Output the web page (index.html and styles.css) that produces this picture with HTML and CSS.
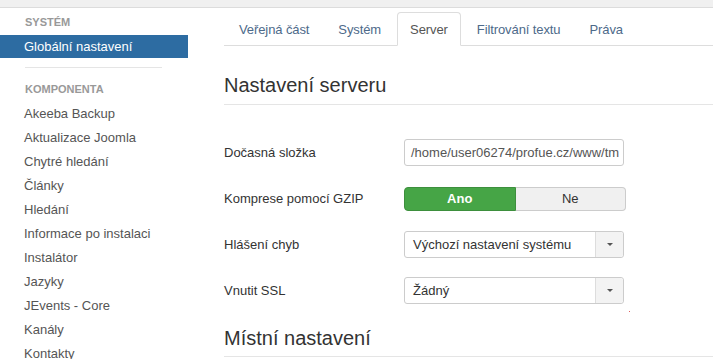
FILE: index.html
```html
<!DOCTYPE html>
<html lang="cs">
<head>
<meta charset="utf-8">
<title>Globální nastavení</title>
<link rel="stylesheet" href="styles.css">
</head>
<body>
<div class="topbar"></div>
<div class="layout">
  <aside class="sidebar">
    <div class="nav-header">SYSTÉM</div>
    <div class="nav-item active">Globální nastavení</div>
    <div class="divider"></div>
    <div class="nav-header second">KOMPONENTA</div>
    <div class="nav-item">Akeeba Backup</div>
    <div class="nav-item">Aktualizace Joomla</div>
    <div class="nav-item">Chytré hledání</div>
    <div class="nav-item">Články</div>
    <div class="nav-item">Hledání</div>
    <div class="nav-item">Informace po instalaci</div>
    <div class="nav-item">Instalátor</div>
    <div class="nav-item">Jazyky</div>
    <div class="nav-item">JEvents - Core</div>
    <div class="nav-item">Kanály</div>
    <div class="nav-item">Kontakty</div>
  </aside>
  <main class="content">
    <ul class="tabs">
      <li class="tab">Veřejná část</li>
      <li class="tab">Systém</li>
      <li class="tab active">Server</li>
      <li class="tab">Filtrování textu</li>
      <li class="tab">Práva</li>
    </ul>
    <h2 class="legend">Nastavení serveru</h2>
    <div class="form">
      <div class="row">
        <label class="label">Dočasná složka</label>
        <div class="input"><span class="input-text">/home/user06274/profue.cz/www/tm</span></div>
      </div>
      <div class="row">
        <label class="label">Komprese pomocí GZIP</label>
        <div class="toggle">
          <span class="opt yes">Ano</span>
          <span class="opt no">Ne</span>
        </div>
      </div>
      <div class="row">
        <label class="label">Hlášení chyb</label>
        <div class="select">
          <span class="value">Výchozí nastavení systému</span>
          <span class="arrow"><span class="caret"></span></span>
        </div>
      </div>
      <div class="row">
        <label class="label">Vnutit SSL</label>
        <div class="select">
          <span class="value">Žádný</span>
          <span class="arrow"><span class="caret"></span></span>
          <span class="dot"></span>
        </div>
      </div>
    </div>
    <h2 class="legend second">Místní nastavení</h2>
  </main>
</div>
</body>
</html>
```

FILE: styles.css
```css
* { box-sizing: border-box; }
html, body { margin: 0; padding: 0; }
body {
  font-family: "Liberation Sans", Arial, sans-serif;
  font-size: 13px;
  color: #333;
  background: #fff;
  width: 713px;
  height: 359px;
  overflow: hidden;
}
.topbar {
  height: 8px;
  background: #f0f0f0;
  border-bottom: 1px solid #dcdcdc;
}
.layout {
  display: flex;
}
.sidebar {
  width: 188px;
  flex: none;
  padding-top: 6px;
}
.nav-header {
  font-size: 11px;
  font-weight: bold;
  color: #999;
  padding-left: 25px;
  line-height: 16px;
  height: 21px;
}
.nav-header.second {
  height: 21px;
  margin-top: 13px;
}
.nav-item {
  padding-left: 24px;
  line-height: 24px;
  height: 24px;
  color: #555;
}
.nav-item.active {
  background: #2d6ca2;
  color: #fff;
  height: 23px;
  line-height: 23px;
}
.divider {
  height: 1px;
  background: #e5e5e5;
  margin: 9px 26px 0 25px;
}
.content {
  flex: 1;
  padding-left: 36px;
  min-width: 0;
}
.tabs {
  list-style: none;
  margin: 3px 0 0 0;
  padding: 0;
  display: flex;
  border-bottom: 1px solid #ddd;
  height: 35px;
  align-items: flex-end;
}
.tab {
  padding: 0 12px;
  height: 34px;
  line-height: 34px;
  margin: 0 1px -1px 2px;
  color: #4d6a8a;
  border: 1px solid transparent;
  border-radius: 4px 4px 0 0;
  letter-spacing: -0.1px;
}
.tab.active {
  color: #555;
  background: #fff;
  border-color: #ddd #ddd transparent #ddd;
}
.legend {
  font-weight: normal;
  font-size: 20px;
  color: #333;
  margin: 27px 0 0 0;
  line-height: 24px;
  padding-bottom: 7px;
  border-bottom: 1px solid #e5e5e5;
}
.legend.second {
  margin-top: 22px;
  padding-bottom: 6px;
}
.form {
  padding-top: 34px;
  display: flex;
  flex-direction: column;
  gap: 19px;
}
.row {
  display: flex;
  align-items: center;
  height: 27px;
}
.label {
  width: 180px;
  flex: none;
  color: #333;
}
.input {
  width: 220px;
  height: 27px;
  border: 1px solid #ccc;
  border-radius: 3px;
  padding: 0 0 0 6px;
  line-height: 25px;
  color: #555;
  white-space: nowrap;
  overflow: hidden;
}
.toggle {
  display: flex;
  width: 222px;
  height: 24px;
}
.opt {
  flex: 1;
  text-align: center;
  line-height: 22px;
  border: 1px solid #ccc;
}
.opt.yes {
  background: #46a546;
  border-color: #3d8f3d;
  color: #fff;
  font-weight: bold;
  border-radius: 4px 0 0 4px;
}
.opt.no {
  background: #f0f0f0;
  color: #333;
  border-left: none;
  border-radius: 0 4px 4px 0;
}
.select {
  position: relative;
  display: flex;
  width: 220px;
  height: 27px;
  border: 1px solid #ccc;
  border-radius: 3px;
}
.value {
  flex: 1;
  padding-left: 8px;
  line-height: 25px;
  color: #333;
}
.arrow {
  width: 28px;
  border-left: 1px solid #ddd;
  background: #f3f3f3;
  display: flex;
  align-items: center;
  justify-content: center;
  border-radius: 0 3px 3px 0;
}
.caret {
  width: 0;
  height: 0;
  border-left: 3px solid transparent;
  border-right: 3px solid transparent;
  border-top: 3px solid #555;
}
.dot {
  position: absolute;
  left: 224px;
  top: 33px;
  width: 1px;
  height: 1px;
  background: #e06060;
}
```
